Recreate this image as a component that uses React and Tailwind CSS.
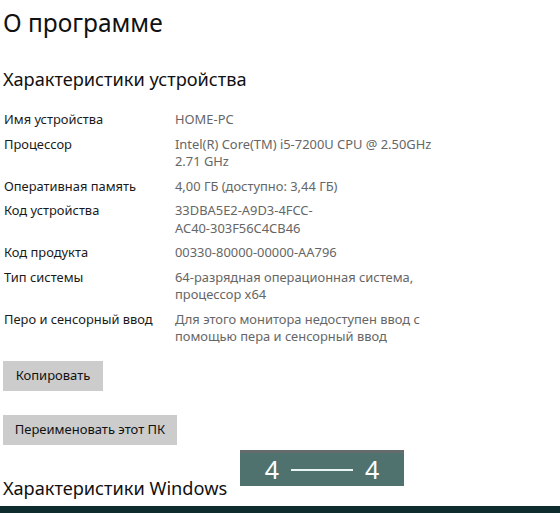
import React from "react";

const rows = [
  { label: "Имя устройства", value: ["HOME-PC"] },
  { label: "Процессор", value: ["Intel(R) Core(TM) i5-7200U CPU @ 2.50GHz", "2.71 GHz"] },
  { label: "Оперативная память", value: ["4,00 ГБ (доступно: 3,44 ГБ)"] },
  { label: "Код устройства", value: ["33DBA5E2-A9D3-4FCC-", "AC40-303F56C4CB46"] },
  { label: "Код продукта", value: ["00330-80000-00000-AA796"] },
  { label: "Тип системы", value: ["64-разрядная операционная система,", "процессор x64"] },
  { label: "Перо и сенсорный ввод", value: ["Для этого монитора недоступен ввод с", "помощью пера и сенсорный ввод"] },
];

export default function App() {
  return (
    <div
      className="relative w-[560px] h-[513px] overflow-hidden bg-white"
      style={{ fontFamily: '"Noto Sans", "Open Sans", sans-serif' }}
    >
      <div className="flex flex-col pl-[3px]">
        <h1 className="mt-[6px] text-[24.5px] leading-[34px] text-[#111] font-normal">О программе</h1>
        <h2 className="mt-[26px] text-[18.2px] leading-[26px] text-[#111] font-normal">Характеристики устройства</h2>

        <div className="mt-[19px] flex flex-col gap-[7px] text-[12.9px] leading-[17.5px]">
          {rows.map((r) => (
            <div key={r.label} className="flex">
              <div className="w-[172px] pl-[1px] text-[#1a1a1a]">{r.label}</div>
              <div className="text-[#666]">
                {r.value.map((v) => (
                  <div key={v}>{v}</div>
                ))}
              </div>
            </div>
          ))}
        </div>

        <button className="mt-[15px] w-[100px] h-[30px] bg-[#cccccc] text-[13px] text-[#111] text-center">
          Копировать
        </button>
        <button className="mt-[24px] w-[174px] h-[30px] bg-[#cccccc] text-[13px] text-[#111] text-center">
          Переименовать этот ПК
        </button>

        <h2 className="mt-[30px] text-[18.2px] leading-[26px] text-[#111] font-normal">Характеристики Windows</h2>
      </div>

      <div className="absolute left-[240px] top-[450px] w-[164px] h-[36px] bg-[#4f726f] border-t-[3px] border-[#636b6b] flex items-center justify-center gap-[12px] text-white text-[25px] leading-none">
        <span>4</span>
        <span className="block w-[62px] h-[2px] bg-[#e8f4f2]"></span>
        <span>4</span>
      </div>

      <div className="absolute left-0 bottom-0 w-full h-[7px] bg-[#0e2b2e]"></div>
    </div>
  );
}
